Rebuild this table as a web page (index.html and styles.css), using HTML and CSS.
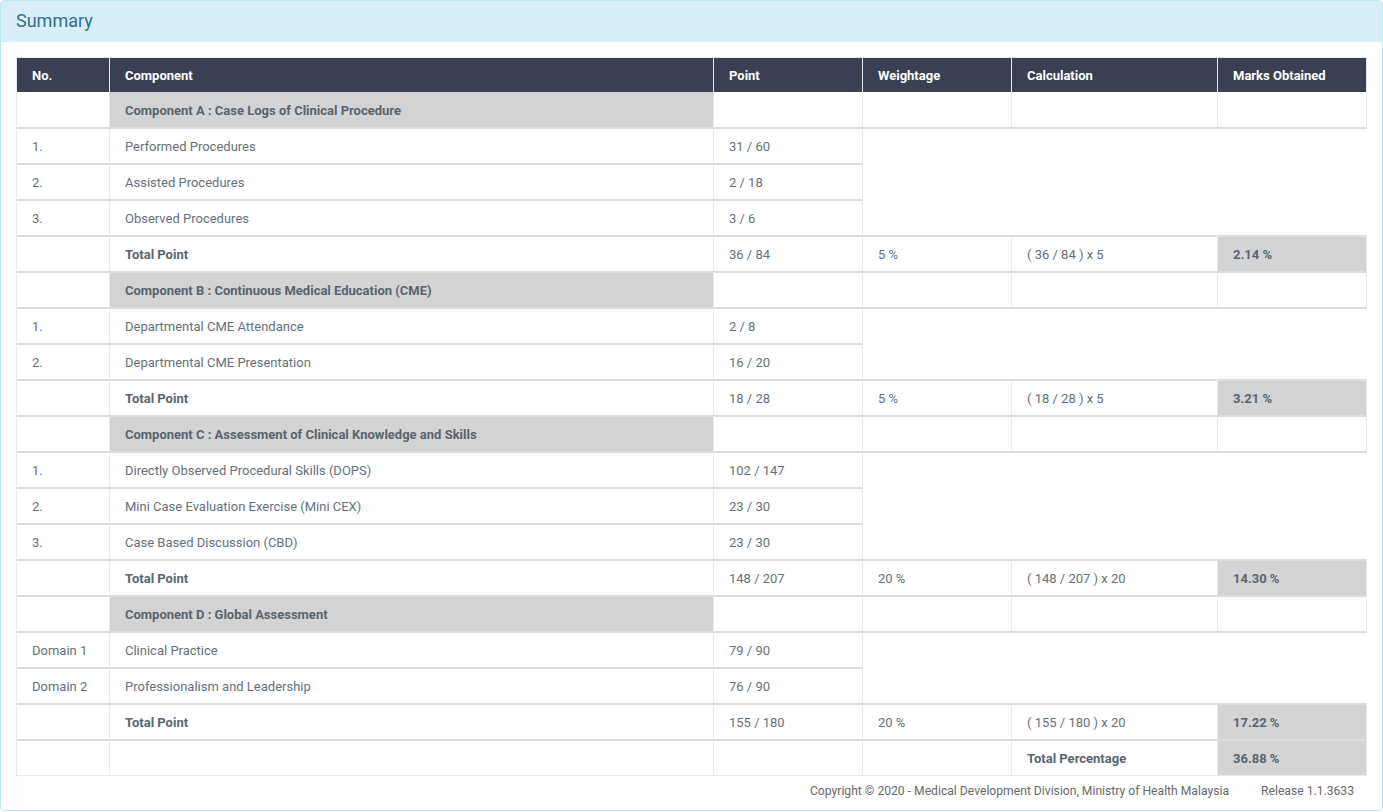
FILE: index.html
```html
<!DOCTYPE html>
<html lang="en">
<head>
<meta charset="utf-8">
<title>Summary</title>
<link rel="stylesheet" href="styles.css">
</head>
<body>
<div class="panel">
  <div class="panel-heading">Summary</div>
  <div class="panel-body">
    <table class="summary">
      <colgroup>
        <col class="c-no"><col class="c-comp"><col class="c-point"><col class="c-weight"><col class="c-calc"><col class="c-marks">
      </colgroup>
      <thead>
        <tr><th>No.</th><th>Component</th><th>Point</th><th>Weightage</th><th>Calculation</th><th>Marks Obtained</th></tr>
      </thead>
      <tbody>
        <tr><td></td><td class="grey">Component A : Case Logs of Clinical Procedure</td><td></td><td></td><td></td><td></td></tr>
        <tr><td>1.</td><td>Performed Procedures</td><td>31 / 60</td><td class="span" rowspan="3" colspan="3"></td></tr>
        <tr><td>2.</td><td>Assisted Procedures</td><td>2 / 18</td></tr>
        <tr><td>3.</td><td>Observed Procedures</td><td>3 / 6</td></tr>
        <tr><td></td><td class="bold">Total Point</td><td>36 / 84</td><td>5 %</td><td>( 36 / 84 ) x 5</td><td class="grey">2.14 %</td></tr>

        <tr><td></td><td class="grey">Component B : Continuous Medical Education (CME)</td><td></td><td></td><td></td><td></td></tr>
        <tr><td>1.</td><td>Departmental CME Attendance</td><td>2 / 8</td><td class="span" rowspan="2" colspan="3"></td></tr>
        <tr><td>2.</td><td>Departmental CME Presentation</td><td>16 / 20</td></tr>
        <tr><td></td><td class="bold">Total Point</td><td>18 / 28</td><td>5 %</td><td>( 18 / 28 ) x 5</td><td class="grey">3.21 %</td></tr>

        <tr><td></td><td class="grey">Component C : Assessment of Clinical Knowledge and Skills</td><td></td><td></td><td></td><td></td></tr>
        <tr><td>1.</td><td>Directly Observed Procedural Skills (DOPS)</td><td>102 / 147</td><td class="span" rowspan="3" colspan="3"></td></tr>
        <tr><td>2.</td><td>Mini Case Evaluation Exercise (Mini CEX)</td><td>23 / 30</td></tr>
        <tr><td>3.</td><td>Case Based Discussion (CBD)</td><td>23 / 30</td></tr>
        <tr><td></td><td class="bold">Total Point</td><td>148 / 207</td><td>20 %</td><td>( 148 / 207 ) x 20</td><td class="grey">14.30 %</td></tr>

        <tr><td></td><td class="grey">Component D : Global Assessment</td><td></td><td></td><td></td><td></td></tr>
        <tr><td>Domain 1</td><td>Clinical Practice</td><td>79 / 90</td><td class="span" rowspan="2" colspan="3"></td></tr>
        <tr><td>Domain 2</td><td>Professionalism and Leadership</td><td>76 / 90</td></tr>
        <tr><td></td><td class="bold">Total Point</td><td>155 / 180</td><td>20 %</td><td>( 155 / 180 ) x 20</td><td class="grey">17.22 %</td></tr>

        <tr><td></td><td></td><td></td><td></td><td class="bold">Total Percentage</td><td class="grey">36.88 %</td></tr>
      </tbody>
    </table>
    <div class="footer">
      <span>Copyright © 2020 - Medical Development Division, Ministry of Health Malaysia</span>
      <span class="release">Release 1.1.3633</span>
    </div>
  </div>
</div>
</body>
</html>
```
FILE: styles.css
```css
html, body {
  margin: 0;
  padding: 0;
  background: #ffffff;
}

body {
  font-family: Roboto, "Liberation Sans", Arial, sans-serif;
  font-size: 13px;
  color: #66717b;
}

.panel {
  border: 1px solid #bce8f1;
  border-radius: 4px;
  overflow: hidden;
}

.panel-heading {
  background: #d9edf7;
  color: #31708f;
  font-size: 18px;
  line-height: 20px;
  padding: 10px 15px;
  border-bottom: 1px solid #d9edf7;
}

.panel-body {
  padding: 15px 15px 12px;
}

.summary {
  width: 100%;
  table-layout: fixed;
  border-collapse: separate;
  border-spacing: 0;
  border-left: 1px solid #e7eaec;
  border-top: 1px solid #e7eaec;
  border-bottom: 1px solid #e7eaec;
}

.c-no { width: 93px; }
.c-comp { width: 604px; }
.c-point { width: 149px; }
.c-weight { width: 149px; }
.c-calc { width: 206px; }

.summary th {
  background: #3a3f51;
  color: #ffffff;
  font-weight: 700;
  text-align: left;
  height: 34px;
  padding: 0 15px;
  border-right: 1px solid #e7eaec;
}

.summary td {
  height: 34px;
  padding: 0 15px;
  border-right: 1px solid #e9ebec;
  border-top: 2px solid #dddddd;
  vertical-align: middle;
  white-space: nowrap;
}

.summary tbody tr:first-child td {
  border-top: 0;
  padding-top: 1px;
}

.summary td.span {
  border-right: 0;
}

.summary td.grey {
  background: #d3d3d3;
  font-weight: 700;
  color: #5a656f;
}

.summary td.bold {
  font-weight: 700;
  color: #5a656f;
}

.footer {
  text-align: right;
  font-size: 12.15px;
  line-height: 14px;
  padding: 8px 13px 0 0;
  color: #676a6c;
}

.footer .release {
  margin-left: 29px;
}
```
